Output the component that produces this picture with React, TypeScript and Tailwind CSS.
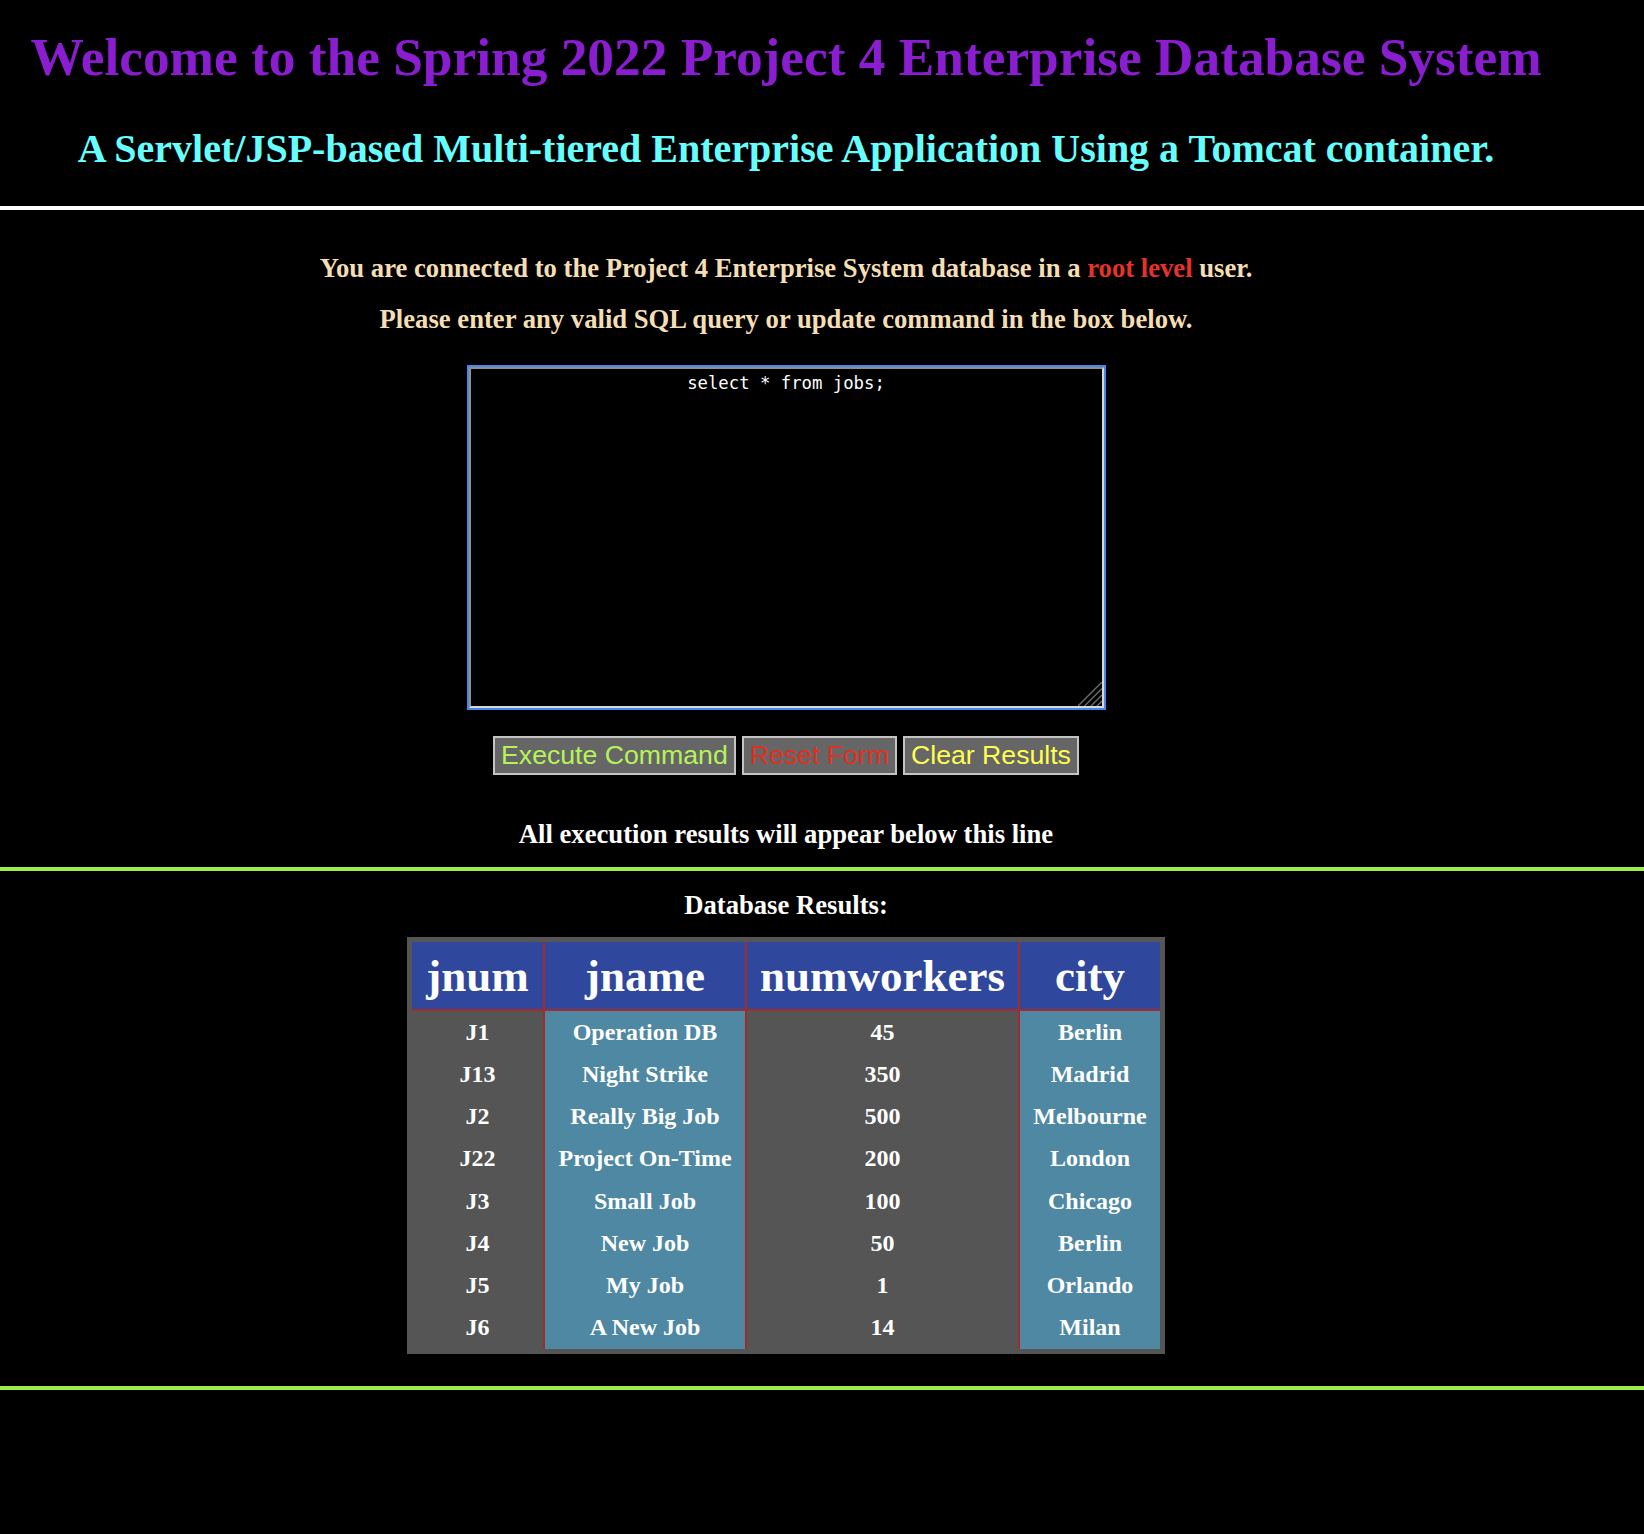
import React from "react";

const rows: [string, string, string, string][] = [
  ["J1", "Operation DB", "45", "Berlin"],
  ["J13", "Night Strike", "350", "Madrid"],
  ["J2", "Really Big Job", "500", "Melbourne"],
  ["J22", "Project On-Time", "200", "London"],
  ["J3", "Small Job", "100", "Chicago"],
  ["J4", "New Job", "50", "Berlin"],
  ["J5", "My Job", "1", "Orlando"],
  ["J6", "A New Job", "14", "Milan"],
];

export default function App() {
  return (
    <div className="w-full min-h-[1534px] bg-black font-['Liberation_Serif','Times_New_Roman',serif] font-bold leading-[normal]">
      <div className="w-[1572px] text-center">
        <h1 className="pt-[26px] text-[53.33px] leading-[normal] text-[#8a1dd0]">
          Welcome to the Spring 2022 Project 4 Enterprise Database System
        </h1>
        <h2 className="mt-[37px] text-[40px] leading-[normal] text-[#66ffff]">
          A Servlet/JSP-based Multi-tiered Enterprise Application Using a Tomcat container.
        </h2>
      </div>
      <div className="mt-[34px] h-[4px] w-full bg-white" />
      <div className="w-[1572px] flex flex-col items-center text-center">
        <p className="mt-[43px] text-[26.67px] leading-[normal] text-[#f5deb3]">
          You are connected to the Project 4 Enterprise System database in a{" "}
          <span className="text-[#e5332a]">root level</span> user.
        </p>
        <p className="mt-[19.5px] text-[26.67px] leading-[normal] text-[#f5deb3]">
          Please enter any valid SQL query or update command in the box below.
        </p>
        <div className="relative mt-[32px]">
          <textarea
            defaultValue="select * from jobs;"
            spellCheck={false}
            className="block w-[635px] h-[341px] resize-none bg-black text-white text-center font-['DejaVu_Sans_Mono',monospace] font-normal text-[17.3px] leading-[normal] pt-[4px] px-[4px] border-2 border-t-[#8f8f8f] border-l-[#8f8f8f] border-b-[#d8d8d8] border-r-[#d8d8d8] ring-2 ring-[#4a86f0] outline-none"
          />
          <svg
            className="absolute right-[2px] bottom-[2px] pointer-events-none"
            width="24"
            height="24"
            viewBox="0 0 24 24"
          >
            <g stroke="#6b6b6b" strokeWidth="1.4">
              <line x1="24" y1="0" x2="0" y2="24" />
              <line x1="24" y1="6.5" x2="6.5" y2="24" />
              <line x1="24" y1="13" x2="13" y2="24" />
              <line x1="24" y1="19" x2="19" y2="24" />
            </g>
          </svg>
        </div>
        <div className="mt-[28px] flex gap-[6px] font-['Liberation_Sans',Arial,sans-serif] font-normal text-[26.67px] leading-[normal]">
          <button className="bg-[#666666] border-2 border-[#c4c4c4] px-[6px] py-[2px] leading-[normal] text-[#b6f35a]">
            Execute Command
          </button>
          <button className="bg-[#666666] border-2 border-[#c4c4c4] px-[6px] py-[2px] leading-[normal] text-[#e0301e]">
            Reset Form
          </button>
          <button className="bg-[#666666] border-2 border-[#c4c4c4] px-[6px] py-[2px] leading-[normal] text-[#ffff50]">
            Clear Results
          </button>
        </div>
        <p className="mt-[44px] text-[26.67px] leading-[normal] text-white">
          All execution results will appear below this line
        </p>
      </div>
      <div className="mt-[17px] h-[4px] w-full bg-[#9cef4b]" />
      <div className="w-[1572px] flex flex-col items-center text-center">
        <p className="mt-[19px] text-[26.67px] leading-[normal] text-white">Database Results:</p>
        <table className="mt-[16px] table-fixed border-separate border-spacing-0 border-[5px] border-[#555555] bg-[#555555] text-white">
          <thead>
            <tr>
              <th className="w-[131px] bg-[#2f479d] text-[45px] leading-[normal] pt-[8px] pb-[7px] px-0 border-b-2 border-[#a52a2a]">
                jnum
              </th>
              <th className="w-[202px] bg-[#2f479d] text-[45px] leading-[normal] pt-[8px] pb-[7px] px-0 border-b-2 border-l-2 border-[#a52a2a]">
                jname
              </th>
              <th className="w-[273px] bg-[#2f479d] text-[45px] leading-[normal] pt-[8px] pb-[7px] px-0 border-b-2 border-l-2 border-[#a52a2a]">
                numworkers
              </th>
              <th className="w-[142px] bg-[#2f479d] text-[45px] leading-[normal] pt-[8px] pb-[7px] px-0 border-b-2 border-l-2 border-[#a52a2a]">
                city
              </th>
            </tr>
          </thead>
          <tbody>
            {rows.map((r, i) => (
              <tr key={i}>
                <td className="text-[24px] leading-[26.25px] py-[8px] px-0 bg-[#555555]">{r[0]}</td>
                <td className="text-[24px] leading-[26.25px] py-[8px] px-0 bg-[#4e88a2] border-l-2 border-[#a52a2a]">{r[1]}</td>
                <td className="text-[24px] leading-[26.25px] py-[8px] px-0 bg-[#555555] border-l-2 border-[#a52a2a]">{r[2]}</td>
                <td className="text-[24px] leading-[26.25px] py-[8px] px-0 bg-[#4e88a2] border-l-2 border-[#a52a2a]">{r[3]}</td>
              </tr>
            ))}
          </tbody>
        </table>
      </div>
      <div className="mt-[32px] h-[4px] w-full bg-[#9cef4b]" />
    </div>
  );
}
